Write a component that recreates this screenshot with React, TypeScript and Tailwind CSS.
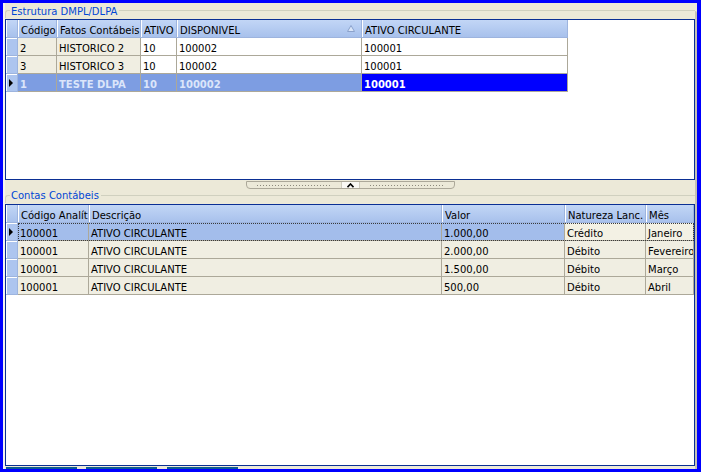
import React from "react";

type Col = { w: string; label: string; sort?: boolean };

const grid1Cols: Col[] = [
  { w: "w-[39px]", label: "Código" },
  { w: "w-[84px]", label: "Fatos Contábeis" },
  { w: "w-[36px]", label: "ATIVO" },
  { w: "w-[185px]", label: "DISPONIVEL", sort: true },
  { w: "w-[206px]", label: "ATIVO CIRCULANTE" },
];

const grid2Cols: Col[] = [
  { w: "w-[71px]", label: "Código Analítico" },
  { w: "w-[353px]", label: "Descrição" },
  { w: "w-[123px]", label: "Valor" },
  { w: "w-[81px]", label: "Natureza Lanc." },
  { w: "w-[48px]", label: "Mês" },
];

const grid1Rows = [
  { cells: ["2", "HISTORICO 2", "10", "100002", "100001"] },
  { cells: ["3", "HISTORICO 3", "10", "100002", "100001"] },
];

const grid2Rows = [
  ["100001", "ATIVO CIRCULANTE", "2.000,00", "Débito", "Fevereiro"],
  ["100001", "ATIVO CIRCULANTE", "1.500,00", "Débito", "Março"],
  ["100001", "ATIVO CIRCULANTE", "500,00", "Débito", "Abril"],
];

const headerCell =
  "relative shrink-0 h-[18px] overflow-hidden whitespace-nowrap border-r border-b border-[#9db4de] bg-linear-to-b from-[#c2d6f6] to-[#a8c1ec] shadow-[inset_1px_0_0_#ffffff] pl-[3px] pt-[3px] leading-[15px] text-black";

const dataCell =
  "shrink-0 h-[18px] overflow-hidden whitespace-nowrap border-r border-b border-[#aca899] pl-[2px] pt-[3px] leading-[15px]";

const rowHeader =
  "shrink-0 w-[12px] h-[18px] border-r border-b border-[#9db4de] bg-[#adc5ef] shadow-[inset_1px_1px_0_#ffffff] flex items-center pl-[3px]";

function Arrow() {
  return (
    <svg width="4" height="8" viewBox="0 0 4 8">
      <polygon points="0,0 4,4 0,8" fill="#000" />
    </svg>
  );
}

function GroupTitle({ label, top, pt }: { label: string; top: string; pt: string }) {
  return (
    <div className="flex items-start">
      <div className={`${top} w-[5px] h-[8px] border-t border-l border-[#d0d0bf] rounded-tl-[3px]`} />
      <span className={`${pt} pl-[1px] pr-[2px] leading-[13px] text-[#0046d5] whitespace-nowrap`}>{label}</span>
      <div className={`${top} flex-1 h-[8px] border-t border-[#d0d0bf]`} />
    </div>
  );
}

function Dots() {
  return (
    <div className="flex-1 px-[10px] flex items-center">
      <div className="w-full h-[1px] bg-[repeating-linear-gradient(to_right,#8c897c_0_1px,transparent_1px_3px)]" />
    </div>
  );
}

export default function App() {
  return (
    <div className="w-[701px] h-[472px] bg-[#0000ff] pt-[3px] pl-[3px] pr-[4px] pb-[3px] font-['DejaVu_Sans',sans-serif] text-[10px] text-black">
      <div className="h-full flex bg-[#ece9d8] border-l-2 border-[#f4f3ee]">
        <div className="w-[690px] flex flex-col">
          {/* Estrutura DMPL/DLPA */}
          <div className="h-[16px]">
            <GroupTitle label="Estrutura DMPL/DLPA" top="mt-[7px]" pt="pt-[2px]" />
          </div>
          <div className="h-[161px] border border-[#0b2f94] bg-white overflow-hidden">
            <div className="flex">
              <div className={`${headerCell} w-[12px]`} />
              {grid1Cols.map((c) => (
                <div key={c.label} className={`${headerCell} ${c.w}`}>
                  {c.label}
                  {c.sort && (
                    <svg className="absolute right-[6px] top-[5px]" width="8" height="7" viewBox="0 0 8 7">
                      <polygon points="0.5,6.5 4,0.5 7.5,6.5" fill="#d9e5f8" stroke="#8ba2cc" strokeWidth="1" />
                    </svg>
                  )}
                </div>
              ))}
            </div>
            {grid1Rows.map((r, i) => (
              <div key={i} className="flex">
                <div className={rowHeader} />
                {r.cells.map((v, j) => (
                  <div
                    key={j}
                    className={`${dataCell} ${grid1Cols[j].w} ${j < 2 ? "bg-[#f0eee2]" : "bg-white"}`}
                  >
                    {v}
                  </div>
                ))}
              </div>
            ))}
            <div className="flex font-bold">
              <div className={rowHeader}>
                <Arrow />
              </div>
              {["1", "TESTE DLPA", "10", "100002"].map((v, j) => (
                <div key={j} className={`${dataCell} ${grid1Cols[j].w} bg-[#7d9de2] text-[#dbe5fa]`}>
                  {v}
                </div>
              ))}
              <div className={`${dataCell} w-[206px] bg-[#0000ff] text-white`}>100001</div>
            </div>
          </div>

          {/* splitter */}
          <div className="h-[9px] flex justify-center">
            <div className="mt-[1px] w-[209px] h-[8px] flex border border-[#aca899] rounded-b-[4px] bg-[#ece9d8]">
              <Dots />
              <div className="w-[19px] bg-[#faf9f4] border-x border-[#cfccbe] flex items-center justify-center">
                <svg width="7" height="5" viewBox="0 0 7 5">
                  <polyline points="0.5,4.2 3.5,1 6.5,4.2" fill="none" stroke="#000" strokeWidth="1.6" />
                </svg>
              </div>
              <Dots />
            </div>
          </div>

          {/* Contas Contábeis */}
          <div className="h-[15px]">
            <GroupTitle label="Contas Contábeis" top="mt-[6px]" pt="pt-0" />
          </div>
          <div className="h-[262px] border border-[#0b2f94] bg-white overflow-hidden">
            <div className="flex">
              <div className={`${headerCell} w-[12px]`} />
              {grid2Cols.map((c) => (
                <div key={c.label} className={`${headerCell} ${c.w}`}>
                  {c.label}
                </div>
              ))}
            </div>
            <div className="flex">
              <div className={rowHeader}>
                <Arrow />
              </div>
              <div className="flex outline-1 outline-dotted outline-[#3a3a3a] -outline-offset-1">
                {["100001", "ATIVO CIRCULANTE", "1.000,00", "Crédito", "Janeiro"].map((v, j) => (
                  <div
                    key={j}
                    className={`${dataCell} ${grid2Cols[j].w} ${j < 3 ? "bg-[#a3bdeb]" : "bg-[#f3f1e4]"}`}
                  >
                    {v}
                  </div>
                ))}
              </div>
            </div>
            {grid2Rows.map((r, i) => (
              <div key={i} className="flex">
                <div className={rowHeader} />
                {r.map((v, j) => (
                  <div key={j} className={`${dataCell} ${grid2Cols[j].w} bg-[#f0eee2]`}>
                    {v}
                  </div>
                ))}
              </div>
            ))}
          </div>

          {/* bottom tabs peeking */}
          <div className="h-[3px] flex items-end pl-[1px] gap-[9px]">
            <div className="w-[71px] h-[2px] bg-[#0b5a92]" />
            <div className="w-[71px] h-[2px] bg-[#0b5a92] ml-[0px]" />
            <div className="w-[71px] h-[2px] bg-[#0b5a92] ml-[1px]" />
          </div>
        </div>
        <div className="mt-[8px] w-[2px] bg-[#c5c2b3] rounded-tr-[2px]" />
      </div>
    </div>
  );
}
